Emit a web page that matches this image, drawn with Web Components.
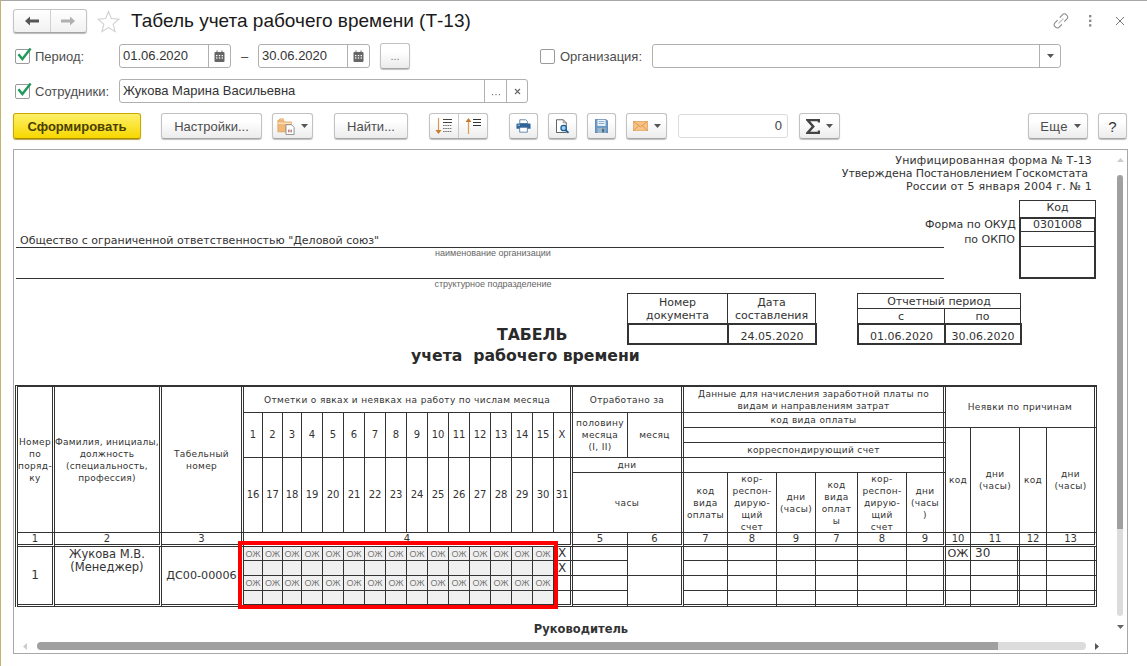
<!DOCTYPE html>
<html lang="ru">
<head>
<meta charset="utf-8">
<title>Табель учета рабочего времени (Т-13)</title>
<style>
  html, body { margin: 0; height: 100%; overflow: hidden; background: #fff; }
</style>
</head>
<body>
<form-page>
  <title-bar>Табель учета рабочего времени (Т-13)</title-bar>

  <filter-row>
    <check-label style="width:104px;margin-left:2px">Период:</check-label>
    <ui-field style="width:112px" actions="calendar">01.06.2020</ui-field>
    <span style="width:27px;text-align:center;font:13px 'Liberation Sans',sans-serif;color:#444">–</span>
    <ui-field style="width:112px" actions="calendar">30.06.2020</ui-field>
    <ui-btn style="width:30px;margin-left:10px;color:#777;font-size:11px;align-self:center">...</ui-btn>
    <check-label off style="width:112px;margin-left:130px">Организация:</check-label>
    <ui-field style="width:409px" actions="drop"></ui-field>
  </filter-row>

  <filter-row>
    <check-label style="width:104px;margin-left:2px">Сотрудники:</check-label>
    <ui-field style="width:409px" actions="dots,clear">Жукова Марина Васильевна</ui-field>
  </filter-row>

  <command-bar>
    <ui-btn primary style="width:128px">Сформировать</ui-btn>
    <ui-btn style="width:101px;margin-left:20px">Настройки...</ui-btn>
    <ui-btn style="width:41px;margin-left:10px"><ui-icon name="folder"></ui-icon><ui-icon name="caret" style="margin-left:6px"></ui-icon></ui-btn>
    <ui-btn style="width:74px;margin-left:21px">Найти...</ui-btn>
    <ui-btn group style="width:59px;margin-left:21px"><ui-seg><ui-icon name="sortdown"></ui-icon></ui-seg><ui-seg><ui-icon name="sortup"></ui-icon></ui-seg></ui-btn>
    <ui-btn style="width:29px;margin-left:21px"><ui-icon name="print"></ui-icon></ui-btn>
    <ui-btn style="width:29px;margin-left:10px"><ui-icon name="preview"></ui-icon></ui-btn>
    <ui-btn style="width:29px;margin-left:10px"><ui-icon name="save"></ui-icon></ui-btn>
    <ui-btn style="width:41px;margin-left:10px"><ui-icon name="mail"></ui-icon><ui-icon name="caret" style="margin-left:6px"></ui-icon></ui-btn>
    <sum-field style="width:110px;margin-left:11px">0</sum-field>
    <ui-btn style="width:41px;margin-left:11px"><ui-icon name="sigma"></ui-icon><ui-icon name="caret" style="margin-left:6px"></ui-icon></ui-btn>
    <ui-btn style="width:60px;margin-left:auto;padding-left:5px;box-sizing:border-box;letter-spacing:.3px">Еще<ui-icon name="caret" style="margin-left:6px"></ui-icon></ui-btn>
    <ui-btn style="width:29px;margin:0 1px 0 10px;font-size:15px;color:#333">?</ui-btn>
  </command-bar>

  <report-sheet></report-sheet>
</form-page>

<script>
// name: [viewBox width, viewBox height, body, drawn width, drawn height]
const ICONS = {
  back: [16, 12, '<path d="M1 6 6 1.5V4.6h9v2.8H6v3.1z" fill="#555"/>'],
  forward: [16, 12, '<path d="M15 6 10 1.5V4.6H1v2.8h9v3.1z" fill="#b0b0b0"/>'],
  star: [23, 23, '<path d="M11.5 1.5 14.4 8.6 22 9.2 16.2 14.2 18 21.6 11.5 17.6 5 21.6 6.8 14.2 1 9.2 8.6 8.6z" fill="#fff" stroke="#cfcfcf" stroke-width="1.1"/>'],
  link: [18, 18, '<g fill="none" stroke="#8a8a8a" stroke-width="1.1"><path d="M7.8 5.6 10.6 2.6a2.4 2.4 0 0 1 3.6 0l.7.7a2.4 2.4 0 0 1 0 3.6L12.3 9.7"/><path d="M9.9 12.3 7.2 15.2a2.4 2.4 0 0 1-3.6 0l-.7-.7a2.4 2.4 0 0 1 0-3.6L5.6 8.1"/><path d="M6.5 11.5 11.5 6.5" stroke="#c4c4c4"/></g>'],
  dots: [4, 14, '<g fill="#8c8c8c"><rect x="1" y="1" width="2.4" height="2.4"/><rect x="1" y="5.6" width="2.4" height="2.4"/><rect x="1" y="10.2" width="2.4" height="2.4"/></g>'],
  close: [10, 10, '<path d="M1 1 9 9M9 1 1 9" stroke="#777" stroke-width="1"/>'],
  clear: [7, 7, '<path d="M1 1 6 6M6 1 1 6" stroke="#666" stroke-width="1.1"/>'],
  calendar: [11, 12, '<path d="M1.5 2h8a1 1 0 0 1 1 1v8a1 1 0 0 1-1 1h-8a1 1 0 0 1-1-1V3a1 1 0 0 1 1-1z" fill="#666"/><rect x="2.5" y="0.5" width="1" height="2" fill="#666"/><rect x="7.5" y="0.5" width="1" height="2" fill="#666"/><g fill="#fff"><rect x="2" y="5" width="1.4" height="1.2"/><rect x="4.8" y="5" width="1.4" height="1.2"/><rect x="7.6" y="5" width="1.4" height="1.2"/><rect x="2" y="7.4" width="1.4" height="1.2"/><rect x="4.8" y="7.4" width="1.4" height="1.2"/><rect x="7.6" y="7.4" width="1.4" height="1.2"/></g>'],
  dotsh: [10, 3, '<g fill="#777"><rect x="1" y="1" width="1.2" height="1.2"/><rect x="4.4" y="1" width="1.2" height="1.2"/><rect x="7.8" y="1" width="1.2" height="1.2"/></g>'],
  caret: [7, 4, '<path d="M0 0h7L3.5 4z" fill="#555"/>'],
  check: [16, 15, '<path d="M2.4 7.2 6.4 12 14.6 1.6" fill="none" stroke="#1f9a5a" stroke-width="2.4"/>'],
  folder: [20, 20, '<path d="M1 3.5h6l1.5 2H16v11H1z" fill="#f2b877" stroke="#d99a55" stroke-width=".8"/><path d="M1 7h15" stroke="#fbe2bf" stroke-width="1.5"/><path d="M3 3.5V2h4v1.5" fill="#f7d3a5" stroke="#d99a55" stroke-width=".7"/><path d="M10 8.5h6l3 3v8h-9z" fill="#fff" stroke="#7c7c7c" stroke-width=".9"/><rect x="12.5" y="14" width="1.4" height="3" fill="#c64b4b"/><rect x="15" y="14" width="1.4" height="3" fill="#777"/>', 18, 18],
  sortdown: [18, 18, '<path d="M3.5 1v14" stroke="#e09a55" stroke-width="1.2"/><path d="M.5 13h6l-3 4z" fill="#cc7a30"/><g stroke="#444" stroke-width="1"><path d="M8 2.5h9M8 5.5h9"/><path d="M8 8.5h9M8 11.5h9M8 14.5h9" stroke="#777" stroke-dasharray="1.6 .6"/></g>'],
  sortup: [16, 18, '<path d="M3.5 3v14" stroke="#e09a55" stroke-width="1.2"/><path d="M.5 5h6l-3-4z" fill="#cc7a30"/><g stroke="#333" stroke-width="1.2"><path d="M8 2.5h8M8 5.5h8M8 8.5h8"/></g>'],
  print: [20, 18, '<path d="M5 1h8l2.2 2.2V6H5z" fill="#fff" stroke="#3f6b96"/><path d="M2 6h16a1.4 1.4 0 0 1 1.4 1.4V13H.6V7.4A1.4 1.4 0 0 1 2 6z" fill="#2f6499"/><rect x="2.2" y="7.6" width="3" height="1.4" fill="#a9c8e3"/><rect x="5" y="11" width="10" height="6.5" fill="#fff" stroke="#3f6b96"/>', 15, 13.5],
  preview: [20, 20, '<path d="M2 1h9l4 4v13H2z" fill="#fff" stroke="#444" stroke-width="1.1"/><path d="M11 1v4h4" fill="none" stroke="#777"/><circle cx="11.5" cy="12" r="3.6" fill="#9fd0ef" stroke="#1c5c99" stroke-width="1.7"/><path d="M14.4 14.8 18 18.4" stroke="#1c5c99" stroke-width="2.4"/>', 15, 15],
  save: [16, 18, '<path d="M.5.5h13l2 2v15H.5z" fill="#6b9ac4" stroke="#4d7da8"/><rect x="3" y="1" width="10" height="7.5" fill="#eef5fb"/><path d="M4.5 3.2h7M4.5 5.6h7" stroke="#6b9ac4"/><rect x="3" y="11" width="10" height="6.5" fill="#9eb6c9"/><rect x="8.6" y="12" width="2.8" height="4.5" fill="#4d6d88"/>', 13, 14.6],
  mail: [22, 15, '<rect x=".5" y=".5" width="21" height="14" fill="#f6c285" stroke="#dd9a4f"/><path d="M1 1 11 8.5 21 1M1 14 8.5 6.5M21 14 13.5 6.5" fill="none" stroke="#d98b3d" stroke-width="1.1"/>', 15, 10.2],
  sigma: [14, 15, '<path d="M13 3.6V1H1.5L7.2 7.5 1.5 14H13v-2.6" fill="none" stroke="#444" stroke-width="2.5"/>'],
  up: [7, 4, '<path d="M0 4h7L3.5 0z" fill="#ccc"/>'],
  down: [7, 4, '<path d="M0 0h7L3.5 4z" fill="#666"/>'],
  left: [4, 7, '<path d="M4 0v7L0 3.5z" fill="#ccc"/>'],
  right: [4, 7, '<path d="M0 0v7l4-3.5z" fill="#555"/>']
};

function iconSvg(name) {
  const [w, h, body, dw = w, dh = h] = ICONS[name];
  return `<svg xmlns="http://www.w3.org/2000/svg" width="${dw}" height="${dh}" viewBox="0 0 ${w} ${h}" style="display:block">${body}</svg>`;
}

class ShadowElement extends HTMLElement {
  constructor() {
    super();
    this.attachShadow({ mode: "open" });
    this.shadowRoot.innerHTML = this.render();
  }
  render() { return "<slot></slot>"; }
}

class UiIcon extends ShadowElement {
  connectedCallback() {
    this.shadowRoot.innerHTML = `<style>:host{display:inline-block;line-height:0}</style>${iconSvg(this.getAttribute("name"))}`;
  }
}

class FormPage extends ShadowElement {
  render() {
    return `<style>
      :host {
        display: flex;
        flex-direction: column;
        box-sizing: border-box;
        width: 1147px;
        height: 666px;
        padding: 8px 19px 0 12px;
        border-top: 1px solid #a8a8a8;
        border-left: 1px solid #c4b36a;
      }
    </style><slot></slot>`;
  }
}

class TitleBar extends ShadowElement {
  render() {
    return `<style>
      :host { display: flex; align-items: center; height: 24px; flex: none; }
      .nav {
        display: flex; width: 74px; height: 24px; box-sizing: border-box;
        border: 1px solid #c4c4c4; border-bottom-color: #a4a4a4; border-radius: 3px;
        background: linear-gradient(#fff, #f1f1f1); box-shadow: 0 1px 1px #bbb;
      }
      .nav div { flex: 1; display: flex; align-items: center; justify-content: center; }
      .nav div + div { border-left: 1px solid #d0d0d0; }
      .star { margin-left: 10px; }
      h1 {
        margin: 0 0 0 11px; font: 400 19px "Liberation Sans", sans-serif; color: #1a1a1a;
        white-space: nowrap;
      }
      .tools { margin-left: auto; display: flex; align-items: center; }
    </style>
    <div class="nav"><div>${iconSvg("back")}</div><div>${iconSvg("forward")}</div></div>
    <div class="star">${iconSvg("star")}</div>
    <h1><slot></slot></h1>
    <div class="tools">
      <span style="margin-right:18px">${iconSvg("link")}</span>
      <span style="margin-right:23px">${iconSvg("dots")}</span>
      <span style="margin-right:3px">${iconSvg("close")}</span>
    </div>`;
  }
}

class FilterRow extends ShadowElement {
  render() {
    return `<style>
      :host { display: flex; align-items: center; height: 24px; margin-top: 11px; flex: none; }
    </style><slot></slot>`;
  }
}

class CommandBar extends ShadowElement {
  render() {
    return `<style>
      :host { display: flex; align-items: stretch; height: 26px; margin-top: 10px; flex: none; }
    </style><slot></slot>`;
  }
}

class CheckLabel extends ShadowElement {
  connectedCallback() {
    this.shadowRoot.querySelector(".box").innerHTML = this.hasAttribute("off") ? "" : iconSvg("check");
  }
  render() {
    return `<style>
      :host {
        display: flex; align-items: center; flex: none;
        font: 13px "Liberation Sans", sans-serif; color: #4d4d4d;
      }
      .box {
        position: relative; width: 13px; height: 13px; margin-right: 5px;
        border: 1px solid #9a9a9a; border-radius: 2px; background: #fff;
      }
      .box svg { position: absolute; left: 0; top: -3px; }
    </style><div class="box"></div><slot></slot>`;
  }
}

class UiField extends ShadowElement {
  connectedCallback() {
    const acts = (this.getAttribute("actions") || "").split(",").filter(Boolean);
    const map = { calendar: ["calendar", 21], dots: ["dotsh", 21], clear: ["clear", 20], drop: ["caret", 20] };
    this.shadowRoot.querySelector(".acts").innerHTML = acts
      .map((a) => `<div class="${a}" style="width:${map[a][1]}px">${iconSvg(map[a][0])}</div>`)
      .join("");
  }
  render() {
    return `<style>
      :host {
        display: flex; flex: none; box-sizing: border-box; height: 24px;
        border: 1px solid #b0b0b0; border-radius: 3px; background: #fff;
        font: 13px "Liberation Sans", sans-serif; color: #333;
      }
      .val { flex: 1; padding: 0 3px; line-height: 22px; white-space: nowrap; overflow: hidden; }
      .acts { display: flex; }
      .acts div { display: flex; align-items: center; justify-content: center; border-left: 1px solid #b0b0b0; }
      .acts .dots svg { margin-top: 6px; }
    </style><div class="val"><slot></slot></div><div class="acts"></div>`;
  }
}

class UiBtn extends ShadowElement {
  render() {
    return `<style>
      :host {
        display: flex; flex: none; align-items: center; justify-content: center;
        box-sizing: border-box; height: 26px;
        border: 1px solid #c2c2c2; border-bottom-color: #a6a6a6; border-radius: 3px;
        background: linear-gradient(#fff 30%, #ececec); box-shadow: 0 1px 1px #c0c0c0;
        font: 13px "Liberation Sans", sans-serif; color: #4d4d4d; white-space: nowrap;
      }
      :host([primary]) {
        border-color: #c9a800; border-bottom-color: #a88c00;
        background: linear-gradient(#fff06a, #f6d800);
        font-weight: 700; color: #4a3f00; box-shadow: 0 1px 1px #b5a24a;
      }
      :host([group]) { align-items: stretch; }
    </style><slot></slot>`;
  }
}

class UiSeg extends ShadowElement {
  render() {
    return `<style>
      :host { flex: 1; display: flex; align-items: center; justify-content: center; }
      :host(:not(:first-child)) { border-left: 1px solid #c8c8c8; }
    </style><slot></slot>`;
  }
}

class SumField extends ShadowElement {
  render() {
    return `<style>
      :host {
        display: block; flex: none; box-sizing: border-box; height: 24px; margin-top: 1px;
        border: 1px solid #dcdcdc; border-radius: 3px; padding-right: 5px;
        text-align: right; font: 13px/22px "Liberation Sans", sans-serif; color: #444;
      }
    </style><slot></slot>`;
  }
}

class DocBox extends ShadowElement {
  render() {
    return `<style>
      :host { display: grid; align-self: start; }
    </style><slot></slot>`;
  }
}

class DocCell extends ShadowElement {
  render() {
    return `<style>
      :host {
        display: flex; align-items: center; justify-content: center; text-align: center;
        box-sizing: border-box; border: 1px solid #333; margin: 0 -1px -1px 0;
        font: 11px/13px "DejaVu Sans", sans-serif; color: #333; white-space: nowrap;
      }
      :host([value]) { border-width: 2px; align-items: flex-end; margin: 0 -2px 0 0; }
    </style><slot></slot>`;
  }
}

class UiScrollbar extends ShadowElement {
  connectedCallback() {
    const v = this.getAttribute("orient") === "v";
    const [a, b] = v ? ["up", "down"] : ["left", "right"];
    this.shadowRoot.querySelector(".a").innerHTML = iconSvg(a);
    this.shadowRoot.querySelector(".b").innerHTML = iconSvg(b);
  }
  render() {
    return `<style>
      :host { position: absolute; display: flex; align-items: center; }
      :host([orient=v]) { flex-direction: column; left: 1101px; top: 5px; width: 10px; height: 477px; }
      :host([orient=h]) { left: 6px; top: 491px; width: 1086px; height: 10px; }
      .a, .b { width: 10px; height: 10px; flex: none; display: flex; align-items: center; justify-content: center; }
      .thumb { background: #a0a0a0; border-radius: 4px 4px 0 0; }
      .track { background: #dcdcdc; }
      :host([orient=v]) .thumb { width: 6px; height: 354px; margin-top: 10px; }
      :host([orient=v]) .track { width: 6px; height: 87px; border-radius: 0 0 4px 4px; margin-bottom: 6px; }
      :host([orient=h]) .thumb { height: 8px; width: 965px; margin-left: 7px; border-radius: 4px 4px 4px 4px; }
      :host([orient=h]) .track { height: 8px; width: 88px; margin-right: 6px; margin-left: -4px; border-radius: 0 4px 4px 0; }
    </style><div class="a"></div><div class="thumb"></div><div class="track"></div><div class="b"></div>`;
  }
}

// column and row ends of the T-13 table, in window pixels
const COL_X = [18, 55, 162, 244, 263, 283, 302, 323, 344, 365, 386, 407, 428, 449, 470, 491, 512, 533, 554, 573, 628, 684, 728, 777, 816, 858, 907, 946, 971, 1020, 1047, 1097];
const ROW_Y = [387, 413, 428, 443, 458, 473, 533, 547, 561, 576, 591, 607];
const DOUBLE_COL = [2, 3, 4, 20, 22, 28, 32];
const DOUBLE_ROW = [8, 12];

class T13Table extends ShadowElement {
  render() {
    const cols = COL_X.slice(1).map((x, i) => `${x - COL_X[i]}px`).join(" ");
    const rows = ROW_Y.slice(1).map((y, i) => `${y - ROW_Y[i]}px`).join(" ");
    const cells = [];
    const c = (c0, c1, r0, r1, text = "", cls = "") => {
      const k = [cls];
      if (DOUBLE_COL.includes(c1)) k.push("dr");
      if (DOUBLE_ROW.includes(r1)) k.push("db");
      cells.push(`<div class="${k.join(" ")}" style="grid-area:${r0}/${c0}/${r1}/${c1}">${text}</div>`);
    };

    c(1, 2, 1, 7, "Номер<br>по<br>поряд-<br>ку");
    c(2, 3, 1, 7, "Фамилия, инициалы,<br>должность<br>(специальность,<br>профессия)", "tight");
    c(3, 4, 1, 7, "Табельный<br>номер");
    c(4, 20, 1, 2, "Отметки о явках и неявках на работу по числам месяца");
    for (let d = 1; d <= 15; d++) c(3 + d, 4 + d, 2, 5, d, "big");
    c(19, 20, 2, 5, "X", "big");
    for (let d = 16; d <= 31; d++) c(d - 12, d - 11, 5, 7, d, "big");

    c(20, 22, 1, 2, "Отработано за");
    c(20, 21, 2, 5, "половину<br>месяца<br>(I, II)");
    c(21, 22, 2, 5, "месяц");
    c(20, 22, 5, 6, "дни");
    c(20, 22, 6, 7, "часы");

    c(22, 28, 1, 2, "Данные для начисления заработной платы по<br>видам и направлениям затрат", "tight");
    c(22, 28, 2, 3, "код вида оплаты");
    c(22, 28, 3, 4);
    c(22, 28, 4, 5, "корреспондирующий счет");
    c(22, 28, 5, 6);
    const sub = ["код<br>вида<br>оплаты", "кор-<br>респон-<br>дирую-<br>щий<br>счет", "дни<br>(часы)", "код<br>вида<br>оплат<br>ы", "кор-<br>респон-<br>дирую-<br>щий<br>счет", "дни<br>(часы<br>)"];
    sub.forEach((t, i) => c(22 + i, 23 + i, 6, 7, t));

    c(28, 32, 1, 3, "Неявки по причинам");
    c(28, 29, 3, 7, "код");
    c(29, 30, 3, 7, "дни<br>(часы)");
    c(30, 31, 3, 7, "код");
    c(31, 32, 3, 7, "дни<br>(часы)");

    [[1, 2, 1], [2, 3, 2], [3, 4, 3], [4, 20, 4], [20, 21, 5], [21, 22, 6], [22, 23, 7], [23, 24, 8], [24, 25, 9], [25, 26, 7], [26, 27, 8], [27, 28, 9], [28, 29, 10], [29, 30, 11], [30, 31, 12], [31, 32, 13]]
      .forEach(([a, b, n]) => c(a, b, 7, 8, n, "num"));

    c(1, 2, 8, 12, "1", "data");
    c(2, 3, 8, 12, "Жукова М.В.<br>(Менеджер)", "data top");
    c(3, 4, 8, 12, "ДС00-00006", "data code");

    for (let r = 8; r < 12; r++) {
      const mark = r === 8 || r === 10;
      for (let i = 4; i < 19; i++) c(i, i + 1, r, r + 1, mark ? "ОЖ" : "", "mark");
      c(19, 20, r, r + 1, r < 10 ? "X" : "", "data");
      c(20, 21, r, r + 1);
      for (let i = 22; i < 28; i++) c(i, i + 1, r, r + 1);
      c(28, 29, r, r + 1, r === 8 ? "ОЖ" : "", "data code");
      c(29, 30, r, r + 1, r === 8 ? "30" : "", "data left dr");
      c(30, 31, r, r + 1);
      c(31, 32, r, r + 1);
    }
    c(21, 22, 8, 10);
    c(21, 22, 10, 12);

    return `<style>
      :host {
        display: grid; position: relative; width: max-content; margin-left: 1px;
        grid-template-columns: ${cols}; grid-template-rows: ${rows};
        border-left: 3px double #333; border-top: 2px solid #333;
        font: 9px/12px "DejaVu Sans", sans-serif; color: #333; letter-spacing: .35px;
      }
      div {
        display: flex; align-items: center; justify-content: center; text-align: center;
        box-sizing: border-box; min-width: 0; white-space: nowrap;
        border-right: 1px solid #333; border-bottom: 1px solid #333;
      }
      .dr { border-right: 3px double #333; }
      .db { border-bottom: 3px double #333; }
      .tight { letter-spacing: .25px; }
      .big { font-size: 10px; letter-spacing: 0; }
      .num { font-size: 10px; line-height: 10px; letter-spacing: 0; }
      .data { font-size: 12px; line-height: 13px; letter-spacing: 0; }
      .code { font-size: 11.2px; }
      .top { align-items: flex-start; padding-top: 1px; font-size: 11.5px; }
      .left { justify-content: flex-start; padding-left: 4px; }
      .mark { background: #f0f0f0; font: 9px/12px "Liberation Sans", sans-serif; color: #777; letter-spacing: 0; }
      .frame {
        position: absolute; left: 220px; top: 154px; width: 320px; height: 68px;
        border: 4px solid #f00; pointer-events: none;
      }
    </style>${cells.join("")}<div class="frame"></div>`;
  }
}

class ReportSheet extends ShadowElement {
  render() {
    return `<style>
      :host {
        display: block; position: relative; flex: none; overflow: hidden;
        box-sizing: border-box; height: 505px; margin-top: 10px;
        border: 1px solid #a8a8a8;
        font: 11px/13px "DejaVu Sans", sans-serif; color: #333;
      }
      .legal { padding: 4px 35px 0 0; text-align: right; height: 46px; letter-spacing: .18px; }
      .legal span { margin-right: 4px; letter-spacing: -.1px; }
      .head { display: flex; height: 85px; }
      .orgs { width: 928px; margin-left: 2px; }
      .line { box-sizing: border-box; border-bottom: 1px solid #333; }
      .line.a { height: 48px; display: flex; align-items: flex-end; padding-left: 4px; }
      .line.b { height: 21px; }
      .cap { height: 10px; text-align: center; font: 9px/10px "Liberation Sans", sans-serif; color: #666; padding-left: 26px; }
      .codes { display: grid; margin-left: -19px; grid-template-columns: 90px 77px; grid-template-rows: 17px 15px 15px 32px; column-gap: 4px; }
      .lbl { text-align: right; line-height: 16px; white-space: nowrap; }
      .code { box-sizing: border-box; text-align: center; border: 1px solid #333; border-bottom: 0; }
      .code.v { border: 2px solid #333; border-bottom: 1px solid #333; line-height: 12px; }
      .code.m { border-width: 0 2px 1px; border-color: #333; border-style: solid; }
      .code.e { border-width: 0 2px 2px; border-color: #333; border-style: solid; }
      .docs {
        display: grid; height: 92px; margin-top: 8px;
        grid-template-columns: 613px 188px 42px 163px; grid-template-rows: 92px;
      }
      .ttl {
        grid-area: 1 / 1; padding: 31px 0 0 397px; white-space: pre;
        font: 700 15.7px/21px "DejaVu Sans", sans-serif; color: #2a2a2a;
      }
      .ttl span { display: block; }
      .chief { margin-top: 16px; text-align: center; font: 700 11.5px/13px "DejaVu Sans", sans-serif; width: 1134px; }
    </style>
    <div class="legal">Унифицированная форма № Т-13<br><span>Утверждена Постановлением Госкомстата</span><br>России от 5 января 2004 г. № 1</div>
    <div class="head">
      <div class="orgs">
        <div class="line a">Общество с ограниченной ответственностью "Деловой союз"</div>
        <div class="cap">наименование организации</div>
        <div class="line b"></div>
        <div class="cap">структурное подразделение</div>
      </div>
      <div class="codes">
        <div></div><div class="code">Код</div>
        <div class="lbl">Форма по ОКУД</div><div class="code v">0301008</div>
        <div class="lbl">по ОКПО</div><div class="code m"></div>
        <div></div><div class="code e"></div>
      </div>
    </div>
    <div class="docs">
      <div class="ttl"><span style="margin-left:86px">ТАБЕЛЬ</span><span>учета  рабочего времени</span></div>
      <doc-box style="grid-area:1/2;grid-template-columns:100px 88px;grid-template-rows:30px 22px">
        <doc-cell>Номер<br>документа</doc-cell><doc-cell>Дата<br>составления</doc-cell>
        <doc-cell value></doc-cell><doc-cell value>24.05.2020</doc-cell>
      </doc-box>
      <doc-box style="grid-area:1/4;grid-template-columns:87px 76px;grid-template-rows:15px 15px 22px">
        <doc-cell style="grid-column:1/3">Отчетный период</doc-cell>
        <doc-cell>с</doc-cell><doc-cell>по</doc-cell>
        <doc-cell value>01.06.2020</doc-cell><doc-cell value>30.06.2020</doc-cell>
      </doc-box>
    </div>
    <t13-table></t13-table>
    <div class="chief">Руководитель</div>
    <ui-scrollbar orient="v"></ui-scrollbar>
    <ui-scrollbar orient="h"></ui-scrollbar>`;
  }
}

customElements.define("ui-icon", UiIcon);
customElements.define("form-page", FormPage);
customElements.define("title-bar", TitleBar);
customElements.define("filter-row", FilterRow);
customElements.define("command-bar", CommandBar);
customElements.define("check-label", CheckLabel);
customElements.define("ui-field", UiField);
customElements.define("ui-btn", UiBtn);
customElements.define("ui-seg", UiSeg);
customElements.define("sum-field", SumField);
customElements.define("doc-box", DocBox);
customElements.define("doc-cell", DocCell);
customElements.define("ui-scrollbar", UiScrollbar);
customElements.define("t13-table", T13Table);
customElements.define("report-sheet", ReportSheet);
</script>
</body>
</html>
